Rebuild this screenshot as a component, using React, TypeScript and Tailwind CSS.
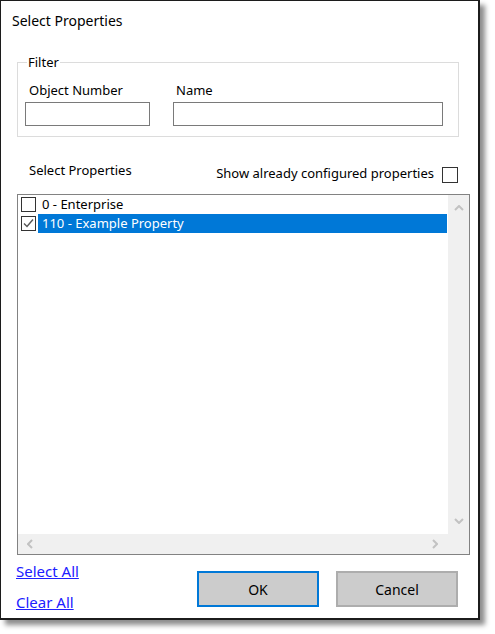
import { useState } from 'react';

const font = 'font-["Segoe_UI","Noto_Sans",sans-serif]';

function Box({ checked }: { checked?: boolean }) {
  return (
    <span className="flex h-[15px] w-[15px] shrink-0 items-center justify-center border border-[#333333] bg-white">
      {checked && (
        <svg width="11" height="11" viewBox="0 0 11 11">
          <path d="M1 5.5 L4 8.5 L10 1.5" fill="none" stroke="#555555" strokeWidth="1.4" />
        </svg>
      )}
    </span>
  );
}

function Chevron({ dir }: { dir: 'up' | 'down' | 'left' | 'right' }) {
  const paths: Record<string, string> = {
    up: 'M1 5 L5 1 L9 5',
    down: 'M1 1 L5 5 L9 1',
    left: 'M5 1 L1 5 L5 9',
    right: 'M1 1 L5 5 L1 9',
  };
  const horiz = dir === 'up' || dir === 'down';
  return (
    <svg width={horiz ? 10 : 6} height={horiz ? 6 : 10} viewBox={horiz ? '0 0 10 6' : '0 0 6 10'}>
      <path d={paths[dir]} fill="none" stroke="#c2c2c2" strokeWidth="2" />
    </svg>
  );
}

const properties = [
  { id: 0, name: 'Enterprise', checked: false },
  { id: 110, name: 'Example Property', checked: true },
];

export default function App() {
  const [selected] = useState(110);

  return (
    <div className={`min-h-[634px] w-[495px] bg-white text-[13px] text-black ${font}`}>
      <div className="flex h-[620px] w-[480px] flex-col border-t border-l border-r-2 border-b-2 border-[#1c1c1c] bg-white shadow-[5px_5px_5px_rgba(0,0,0,0.45)]">
        <div className="pl-[11px] pt-[10px] text-[14px] leading-[20px]">Select Properties</div>

        {/* Filter group */}
        <fieldset className="ml-[16px] mt-[23px] w-[442px] border border-[#dcdcdc] pb-[10px] pl-[7px]">
          <legend className="ml-[2px] px-[1px] leading-[16px]">Filter</legend>
          <div className="mt-[11px] flex gap-[23px]">
            <div className="flex flex-col">
              <span className="pl-[4px] leading-[18px]">Object Number</span>
              <input className="mt-[3px] h-[24px] w-[125px] border border-[#7a7a7a] bg-white px-1 outline-none" />
            </div>
            <div className="flex flex-col">
              <span className="pl-[3px] leading-[18px]">Name</span>
              <input className="mt-[3px] h-[24px] w-[270px] border border-[#7a7a7a] bg-white px-1 outline-none" />
            </div>
          </div>
        </fieldset>

        <div className="flex h-[57px] items-start justify-between pl-[28px] pr-[20px]">
          <span className="mt-[24px] leading-[18px]">Select Properties</span>
          <div className="mt-[27px] flex items-start gap-[8px]">
            <span className="leading-[18px]">Show already configured properties</span>
            <span className="mt-[3px] h-[16px] w-[16px] border border-[#333333] bg-white" />
          </div>
        </div>

        {/* Property list */}
        <div className="ml-[16px] grid h-[361px] w-[453px] grid-cols-[1fr_21px] grid-rows-[1fr_20px] border border-[#828282]">
          <div className="flex flex-col bg-white">
            {properties.map((p) => (
              <div key={p.id} className="flex h-[19px] items-start">
                <div className="ml-[3px] mt-[2px]">
                  <Box checked={p.checked} />
                </div>
                <div
                  className={`ml-[2px] mr-[1px] flex h-[19px] flex-1 items-center pl-[4px] leading-[19px] ${
                    selected === p.id ? 'bg-[#0078d7] text-white' : ''
                  }`}
                >
                  {p.id} - {p.name}
                </div>
              </div>
            ))}
          </div>
          <div className="flex flex-col items-center justify-between bg-[#f0f0f0] py-[10px]">
            <Chevron dir="up" />
            <Chevron dir="down" />
          </div>
          <div className="col-span-2 flex items-center justify-between bg-[#f0f0f0] pl-[9px] pr-[31px]">
            <Chevron dir="left" />
            <Chevron dir="right" />
          </div>
        </div>

        {/* Footer */}
        <div className="flex">
          <div className="flex flex-col pl-[15px] text-[15px]">
            <a href="#" className="mt-[7px] leading-[18px] text-[#2020ff] underline">Select All</a>
            <a href="#" className="mt-[13px] leading-[18px] text-[#2020ff] underline">Clear All</a>
          </div>
          <button className="ml-auto mt-[16px] h-[36px] w-[122px] border-2 border-[#0078d7] bg-[#cccccc] text-[14px]">
            OK
          </button>
          <button className="ml-[17px] mr-[20px] mt-[16px] h-[36px] w-[122px] border-2 border-[#adadad] bg-[#cccccc] text-[14px]">
            Cancel
          </button>
        </div>
      </div>
    </div>
  );
}
